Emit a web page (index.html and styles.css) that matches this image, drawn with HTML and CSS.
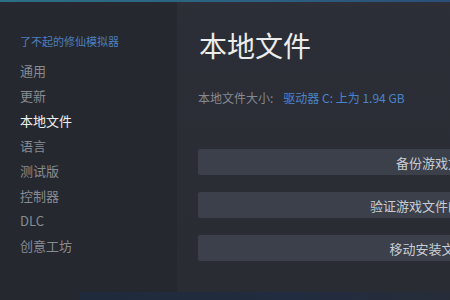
FILE: index.html
```html
<!DOCTYPE html>
<html lang="zh-CN">
<head>
    <meta charset="UTF-8">
    <meta name="viewport" content="width=device-width, initial-scale=1.0">
    <title>属性 - 本地文件</title>
    <link rel="stylesheet" href="styles.css">
</head>
<body>
    <div class="topline"></div>
    <div class="window">
        <div class="sidebar">
            <div class="game-title">了不起的修仙模拟器</div>
            <div class="nav">
                <div class="nav-item">通用</div>
                <div class="nav-item">更新</div>
                <div class="nav-item active">本地文件</div>
                <div class="nav-item">语言</div>
                <div class="nav-item">测试版</div>
                <div class="nav-item">控制器</div>
                <div class="nav-item">DLC</div>
                <div class="nav-item">创意工坊</div>
            </div>
        </div>
        <div class="content">
            <h1 class="page-title">本地文件</h1>
            <div class="size-row">
                <span class="size-label">本地文件大小:</span>
                <span class="size-value">驱动器 C: 上为 1.94 GB</span>
            </div>
            <div class="actions">
                <button class="action">备份游戏文件</button>
                <button class="action">验证游戏文件的完整性</button>
                <button class="action">移动安装文件夹</button>
            </div>
        </div>
    </div>
    <div class="bottombar"></div>
</body>
</html>
```

FILE: styles.css
```css
html, body {
    margin: 0;
    padding: 0;
    height: 300px;
    overflow: hidden;
}
body {
    font-family: "Noto Sans CJK SC", "Noto Sans", sans-serif;
    background-color: #25282f;
    display: flex;
    flex-direction: column;
}
.topline {
    height: 2px;
    background: linear-gradient(90deg, #2c6f86, #2c5f80 60%, #2a4e78);
}
.window {
    display: flex;
    height: 290px;
}
.sidebar {
    width: 177px;
    flex-shrink: 0;
    background: linear-gradient(180deg, #282830 0, #25282f 14px, #25282f);
    padding: 31px 0 0 20px;
    box-sizing: border-box;
}
.game-title {
    font-size: 11px;
    line-height: 16px;
    color: #4d7fbd;
    margin-bottom: 9px;
}
.nav-item {
    font-size: 13px;
    line-height: 25px;
    color: #878b92;
}
.nav-item.active {
    color: #f0f0f0;
}
.content {
    flex: 1;
    min-width: 0;
    background: linear-gradient(180deg, #2e2f38 0, #2b2e36 14px, #292c33 100%);
    padding: 27px 0 0 21px;
}
.page-title {
    margin: 0 0 29px;
    font-size: 28px;
    line-height: 32px;
    font-weight: normal;
    color: #ececec;
    padding-left: 1px;
}
.size-row {
    font-size: 12px;
    line-height: 16px;
    display: flex;
    gap: 10px;
}
.size-label {
    color: #868a91;
}
.size-value {
    color: #4a84cc;
}
.actions {
    margin-top: 43px;
    display: flex;
    flex-direction: column;
    gap: 17px;
}
.action {
    width: 474px;
    height: 26px;
    border: none;
    border-radius: 2px;
    background-color: #3c404a;
    color: #c9cdd3;
    font-family: inherit;
    font-size: 13px;
    text-align: center;
    padding: 0;
}
.bottombar {
    height: 8px;
    margin-left: 80px;
    background: linear-gradient(90deg, #1f2a3c, #222c40 60%, #262c38);
}
```
